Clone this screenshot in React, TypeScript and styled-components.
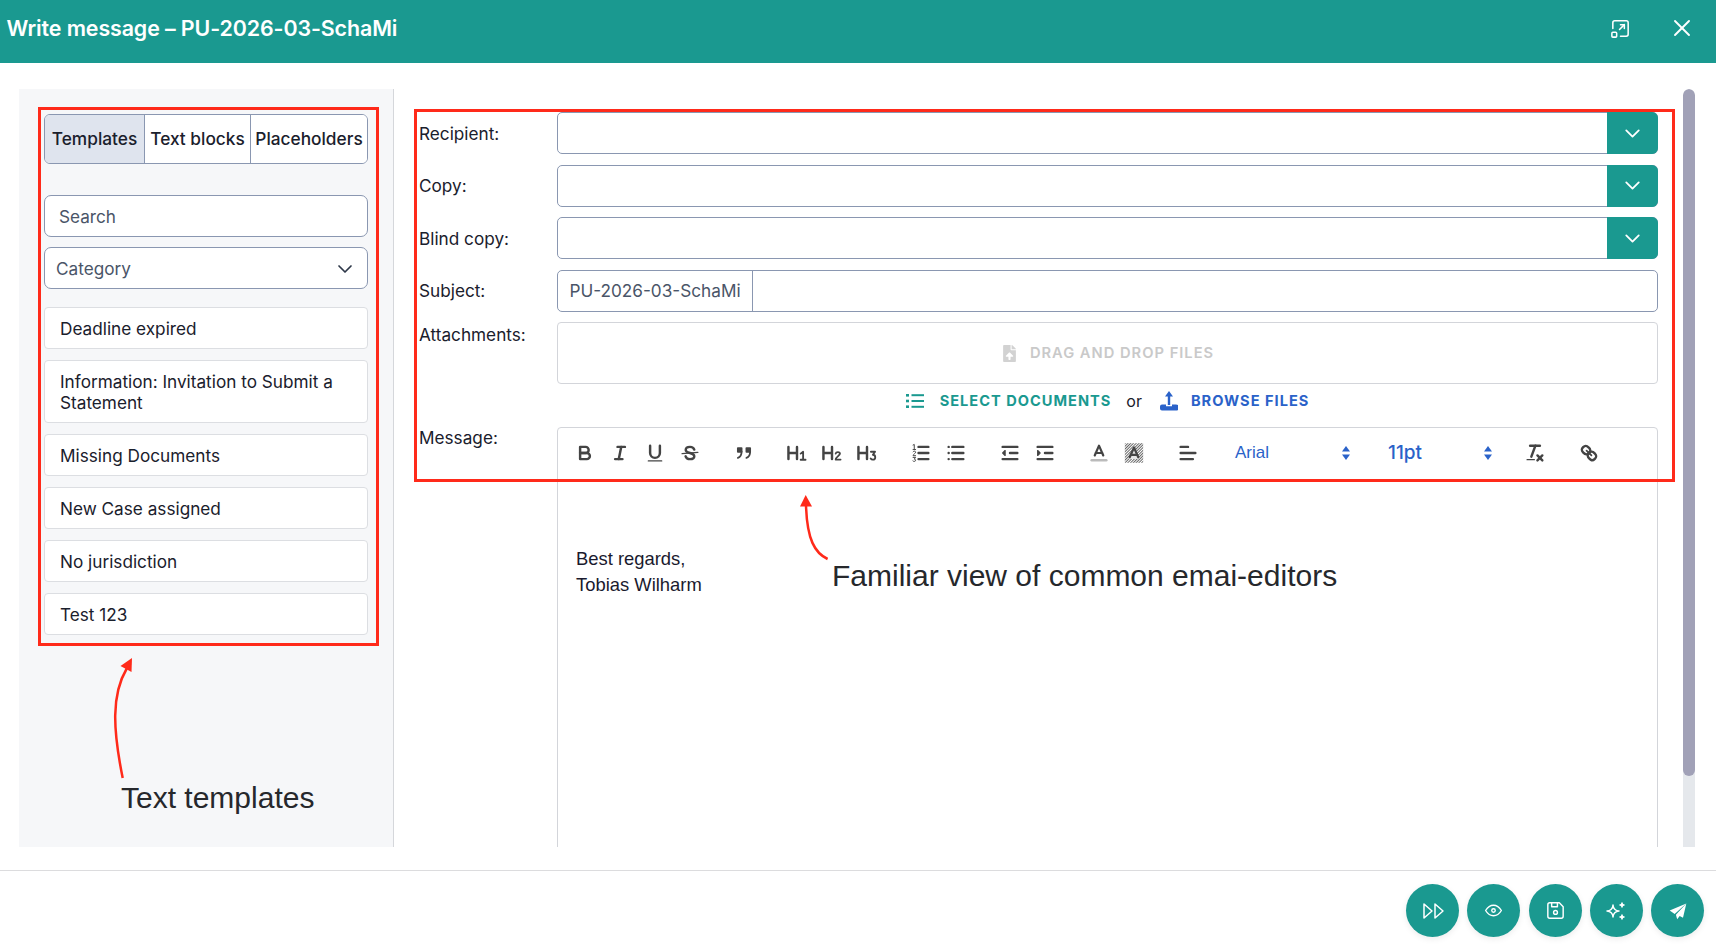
import styled, { createGlobalStyle } from 'styled-components';
import { ReactNode } from 'react';
import { TbWindowMaximize, TbX, TbChevronDown, TbPlayerTrackNext, TbEye, TbDeviceFloppy, TbSparkles } from 'react-icons/tb';
import { FaFileUpload } from 'react-icons/fa';

const colors = {
  teal: '#1a9990',
  border: '#8a97b1',
  softBorder: '#d3d5da',
  text: '#1a202c',
  blue: '#2a62c9',
  red: '#ff2a1a',
};

const GlobalStyle = createGlobalStyle`
  html, body {
    margin: 0;
    padding: 0;
    background: #fff;
    overflow: hidden;
    font-family: Inter, "Liberation Sans", sans-serif;
    color: ${colors.text};
  }
  * {
    box-sizing: border-box;
  }
`;

const Page = styled.div`
  position: relative;
  width: 1716px;
  height: 945px;
  display: flex;
  flex-direction: column;
  overflow: hidden;
`;

const Header = styled.header`
  height: 63px;
  flex: none;
  background: ${colors.teal};
  color: #fff;
  display: flex;
  align-items: center;
  justify-content: space-between;
  padding: 0 20px 7px 6.5px;
`;

const Title = styled.h1`
  margin: 0;
  font-size: 21.4px;
  font-weight: 600;
  letter-spacing: -0.1px;
`;

const HeaderIcons = styled.div`
  display: flex;
  align-items: center;
  gap: 36px;
  color: #fff;
`;

const Body = styled.div`
  flex: 1;
  min-height: 0;
  display: flex;
  padding: 26px 21px 23px 19px;
`;

const Sidebar = styled.aside`
  width: 375px;
  flex: none;
  background: #f6f7f9;
  border-right: 1px solid #d5d7db;
  padding: 25px 25px 0 25px;
  display: flex;
  flex-direction: column;
`;

const Tabs = styled.div`
  display: flex;
  height: 50px;
  border: 1px solid ${colors.border};
  border-radius: 6px;
  background: #fff;
  overflow: hidden;
  margin-bottom: 31px;
`;

const Tab = styled.div<{ $active?: boolean; $width: number }>`
  width: ${(p) => p.$width}px;
  flex: none;
  display: flex;
  align-items: center;
  justify-content: center;
  padding-bottom: 2px;
  font-size: 17.3px;
  font-weight: 500;
  white-space: nowrap;
  background: ${(p) => (p.$active ? '#dfe4ee' : '#fff')};
  border-right: 1px solid ${colors.border};
  &:last-child {
    border-right: none;
    flex: 1;
  }
`;

const SearchBox = styled.div`
  height: 42px;
  border: 1px solid ${colors.border};
  border-radius: 7px;
  background: #fff;
  display: flex;
  align-items: center;
  padding: 1px 0 0 14px;
  font-size: 17.2px;
  color: #4a5568;
  margin-bottom: 10px;
`;

const CategorySelect = styled.div`
  height: 42px;
  border: 1px solid ${colors.border};
  border-radius: 7px;
  background: #fff;
  display: flex;
  align-items: center;
  justify-content: space-between;
  padding: 1px 10px 0 11px;
  font-size: 17.2px;
  color: #4a5568;
  margin-bottom: 18px;
`;

const TemplateList = styled.div`
  display: flex;
  flex-direction: column;
  gap: 11px;
`;

const TemplateItem = styled.div`
  min-height: 42px;
  border: 1px solid #dcdee2;
  border-radius: 4px;
  background: #fff;
  padding: 10px 15px 9px;
  font-size: 17.2px;
  line-height: 21px;
  color: ${colors.text};
`;

const Main = styled.main`
  flex: 1;
  min-width: 0;
  padding: 23px 25px 0 25px;
  display: flex;
  flex-direction: column;
  overflow: hidden;
`;

const FieldRow = styled.div`
  display: flex;
  align-items: center;
  margin-bottom: 10.5px;
`;

const TopRow = styled.div`
  display: flex;
  align-items: flex-start;
`;

const MessageRow = styled(TopRow)`
  flex: 1;
  min-height: 0;
`;

const Label = styled.label<{ $pt?: number }>`
  width: 138px;
  flex: none;
  font-size: 17.2px;
  padding-top: ${(p) => p.$pt ?? 0}px;
  color: ${colors.text};
`;

const ComboInput = styled.div`
  flex: 1;
  height: 42px;
  display: flex;
  border: 1px solid ${colors.border};
  border-radius: 5px;
  background: #fff;
`;

const ComboField = styled.div`
  flex: 1;
`;

const ComboButton = styled.div`
  width: 51px;
  margin: -1px -1px -1px 0;
  background: ${colors.teal};
  color: #fff;
  border-radius: 0 6px 6px 0;
  display: flex;
  align-items: center;
  justify-content: center;
`;

const SubjectPrefix = styled.div`
  width: 195px;
  flex: none;
  border-right: 1px solid ${colors.border};
  display: flex;
  align-items: center;
  justify-content: center;
  font-size: 17.2px;
  color: #4a5568;
`;

const DropZone = styled.div`
  flex: 1;
  height: 62px;
  border: 1px solid ${colors.softBorder};
  border-radius: 4px;
  display: flex;
  align-items: center;
  justify-content: center;
  gap: 12px;
  font-size: 14.7px;
  font-weight: 600;
  letter-spacing: 1px;
  color: #c9c9c9;
`;

const FileActions = styled.div`
  display: flex;
  align-items: center;
  justify-content: center;
  height: 33px;
  margin: 0 0 10px 138px;
  font-size: 16px;
`;

const ActionLink = styled.span<{ $color: string; $gap: number }>`
  display: inline-flex;
  align-items: center;
  gap: ${(p) => p.$gap}px;
  font-size: 14.6px;
  font-weight: 700;
  letter-spacing: 1px;
  color: ${(p) => p.$color};
`;

const OrText = styled.span`
  margin: 0 18px 0 15px;
`;

const Editor = styled.div`
  flex: 1;
  min-width: 0;
  align-self: stretch;
  margin-bottom: -10px;
  border: 1px solid ${colors.softBorder};
  border-radius: 4px 4px 0 0;
  display: flex;
  flex-direction: column;
`;

const Toolbar = styled.div`
  height: 52px;
  flex: none;
  border-bottom: 1px solid ${colors.softBorder};
  display: flex;
  align-items: center;
  padding: 0 0 2px 9px;
  gap: 19px;
`;

const ToolGroup = styled.div`
  display: flex;
  align-items: center;
`;

const HeadingGroup = styled(ToolGroup)`
  margin-left: -1px;
`;

const ToolButton = styled.span`
  width: 35px;
  height: 30px;
  display: flex;
  align-items: center;
  justify-content: center;
  color: #444;
`;

const Picker = styled.div<{ $pl: number; $pr?: number; $width: number; $sans?: boolean }>`
  width: ${(p) => p.$pl + p.$width + (p.$pr ?? 0)}px;
  padding-left: ${(p) => p.$pl}px;
  padding-right: ${(p) => p.$pr ?? 0}px;
  display: flex;
  align-items: center;
  justify-content: space-between;
  color: ${colors.blue};
  font-size: ${(p) => (p.$sans ? 17 : 19)}px;
  font-family: ${(p) => (p.$sans ? '"Liberation Sans", Arial, sans-serif' : 'inherit')};
  font-weight: ${(p) => (p.$sans ? 400 : 500)};
`;

const EditorBody = styled.div`
  flex: 1;
  padding: 66px 18px 0;
  font-family: "Liberation Sans", Arial, sans-serif;
  font-size: 18.4px;
  line-height: 26px;
  color: #1a1a2e;
`;

const Scrollbar = styled.div`
  width: 12px;
  flex: none;
  background: #e5e8ec;
  border-radius: 6px 6px 0 0;
  overflow: hidden;
`;

const ScrollThumb = styled.div`
  height: 687px;
  background: #a1a1b7;
  border-radius: 6px;
`;

const Footer = styled.footer`
  height: 75px;
  flex: none;
  border-top: 1.5px solid #dcdcde;
  display: flex;
  align-items: center;
  justify-content: flex-end;
  gap: 8.2px;
  padding: 5px 12px 0 0;
`;

const RoundButton = styled.button`
  width: 53px;
  height: 53px;
  padding: 0;
  border: none;
  border-radius: 50%;
  background: ${colors.teal};
  color: #fff;
  display: flex;
  align-items: center;
  justify-content: center;
  box-shadow: 0 2px 6px rgba(0, 0, 0, 0.08);
`;

const RedBox = styled.div<{ $x: number; $y: number; $w: number; $h: number }>`
  position: absolute;
  left: ${(p) => p.$x}px;
  top: ${(p) => p.$y}px;
  width: ${(p) => p.$w}px;
  height: ${(p) => p.$h}px;
  border: 3px solid ${colors.red};
  pointer-events: none;
`;

const Note = styled.div<{ $x: number; $y: number }>`
  position: absolute;
  left: ${(p) => p.$x}px;
  top: ${(p) => p.$y}px;
  font-family: "Liberation Sans", Arial, sans-serif;
  font-size: 30px;
  line-height: 34px;
  color: #26282c;
  white-space: nowrap;
`;

const ArrowLayer = styled.svg`
  position: absolute;
  left: 0;
  top: 0;
  pointer-events: none;
`;

function QuillIcon({ children }: { children: ReactNode }) {
  return (
    <svg width="22" height="22" viewBox="0 0 18 18" fill="none" stroke="#444" strokeWidth="2" strokeLinecap="round" strokeLinejoin="round">
      {children}
    </svg>
  );
}

function PickerArrows() {
  return (
    <svg width="10" height="16" viewBox="0 0 10 16" fill={colors.blue}>
      <path d="M5 1 9 6.5H1Z" />
      <path d="M5 15 9 9.5H1Z" />
    </svg>
  );
}

const templates = [
  'Deadline expired',
  'Information: Invitation to Submit a Statement',
  'Missing Documents',
  'New Case assigned',
  'No jurisdiction',
  'Test 123',
];

function App() {
  return (
    <Page>
      <GlobalStyle />
      <Header>
        <Title>Write message – PU-2026-03-SchaMi</Title>
        <HeaderIcons>
          <TbWindowMaximize size={23} strokeWidth={1.6} />
          <TbX size={28} strokeWidth={1.6} />
        </HeaderIcons>
      </Header>

      <Body>
        <Sidebar>
          <Tabs>
            <Tab $active $width={100}>Templates</Tab>
            <Tab $width={106}>Text blocks</Tab>
            <Tab $width={116}>Placeholders</Tab>
          </Tabs>
          <SearchBox>Search</SearchBox>
          <CategorySelect>
            Category
            <TbChevronDown size={24} color="#2d3748" strokeWidth={1.7} />
          </CategorySelect>
          <TemplateList>
            {templates.map((t) => (
              <TemplateItem key={t}>{t}</TemplateItem>
            ))}
          </TemplateList>
        </Sidebar>

        <Main>
          {['Recipient:', 'Copy:', 'Blind copy:'].map((l) => (
            <FieldRow key={l}>
              <Label>{l}</Label>
              <ComboInput>
                <ComboField />
                <ComboButton>
                  <TbChevronDown size={25} strokeWidth={1.7} />
                </ComboButton>
              </ComboInput>
            </FieldRow>
          ))}
          <FieldRow>
            <Label>Subject:</Label>
            <ComboInput>
              <SubjectPrefix>PU-2026-03-SchaMi</SubjectPrefix>
              <ComboField />
            </ComboInput>
          </FieldRow>
          <TopRow>
            <Label $pt={2}>Attachments:</Label>
            <DropZone>
              <FaFileUpload size={17} color="#d2d2d2" />
              DRAG AND DROP FILES
            </DropZone>
          </TopRow>
          <FileActions>
            <ActionLink $color={colors.teal} $gap={16}>
              <svg width="18" height="16" viewBox="0 0 18 16" fill={colors.teal}>
                <rect x="0" y="1" width="3" height="2.6" />
                <rect x="0" y="6.7" width="3" height="2.6" />
                <rect x="0" y="12.4" width="3" height="2.6" />
                <rect x="5.5" y="1.2" width="12.5" height="2" />
                <rect x="5.5" y="7" width="12.5" height="2" />
                <rect x="5.5" y="12.8" width="12.5" height="2" />
              </svg>
              SELECT DOCUMENTS
            </ActionLink>
            <OrText>or</OrText>
            <ActionLink $color={colors.blue} $gap={13}>
              <svg width="18" height="20" viewBox="0 0 18 20" fill={colors.blue}>
                <path d="M9 0 13 5.5H10.2V14H7.8V5.5H5Z" />
                <path d="M0 15.5A2 2 0 0 1 2 13.5H6V15.2H12V13.5H16A2.3 2.3 0 0 1 16 19.5H2A2 2 0 0 1 0 17.5Z" />
              </svg>
              BROWSE FILES
            </ActionLink>
          </FileActions>
          <MessageRow>
            <Label>Message:</Label>
            <Editor>
              <Toolbar>
                <ToolGroup>
                  <ToolButton>
                    <QuillIcon>
                      <path d="M5,4H9.5A2.5,2.5,0,0,1,12,6.5v0A2.5,2.5,0,0,1,9.5,9H5V4Z" />
                      <path d="M5,9h5.5A2.5,2.5,0,0,1,13,11.5v0A2.5,2.5,0,0,1,10.5,14H5V9Z" />
                    </QuillIcon>
                  </ToolButton>
                  <ToolButton>
                    <QuillIcon>
                      <line x1="7" x2="13" y1="4" y2="4" />
                      <line x1="5" x2="11" y1="14" y2="14" />
                      <line x1="8" x2="10" y1="14" y2="4" />
                    </QuillIcon>
                  </ToolButton>
                  <ToolButton>
                    <QuillIcon>
                      <path d="M5,3V9a4,4,0,0,0,4,4h0a4,4,0,0,0,4-4V3" />
                      <rect x="3" y="15" width="12" height="1" rx=".5" fill="#444" stroke="none" />
                    </QuillIcon>
                  </ToolButton>
                  <ToolButton>
                    <QuillIcon>
                      <line x1="15.5" x2="2.5" y1="8.5" y2="9.5" strokeWidth="1" />
                      <path d="M12.5 6.2C12 4.7 10.6 4 9 4 7 4 5.5 5 5.5 6.5 5.5 7.8 6.6 8.4 9 9c2.4.6 3.5 1.2 3.5 2.6C12.5 13 11 14 9 14c-1.7 0-3.1-.8-3.6-2.3" />
                    </QuillIcon>
                  </ToolButton>
                </ToolGroup>
                <ToolGroup>
                  <ToolButton>
                    <QuillIcon>
                      <rect x="4" y="5" width="3" height="3" fill="#444" strokeWidth="1.5" />
                      <rect x="11" y="5" width="3" height="3" fill="#444" strokeWidth="1.5" />
                      <path d="M7,8c0,4-3,5-3,5" strokeWidth="1.5" />
                      <path d="M14,8c0,4-3,5-3,5" strokeWidth="1.5" />
                    </QuillIcon>
                  </ToolButton>
                </ToolGroup>
                <HeadingGroup>
                  <ToolButton>
                    <QuillIcon>
                      <path d="M2 4V14M9 4V14M2 9H9" />
                      <path d="M12 9.5 14 8V14M12 14.5H16" strokeWidth="1.5" />
                    </QuillIcon>
                  </ToolButton>
                  <ToolButton>
                    <QuillIcon>
                      <path d="M2 4V14M9 4V14M2 9H9" />
                      <path d="M12 9.5C12.3 7.8 15.5 7.8 15.5 9.6 15.5 11 12 12.4 12 14.4H16" strokeWidth="1.5" />
                    </QuillIcon>
                  </ToolButton>
                  <ToolButton>
                    <QuillIcon>
                      <path d="M2 4V14M9 4V14M2 9H9" />
                      <path d="M12.2 8H15.6L13.8 10.4C16.4 10.4 16.4 14.4 13.8 14.4 13 14.4 12.4 14.1 12 13.5" strokeWidth="1.5" />
                    </QuillIcon>
                  </ToolButton>
                </HeadingGroup>
                <ToolGroup>
                  <ToolButton>
                    <QuillIcon>
                      <path d="M7 4H15M7 9H15M7 14H15" />
                      <path d="M2.5 2.5 3.5 2V6M2.5 6.2H4.6M2.5 8C3 7.2 4.6 7.3 4.6 8.4 4.6 9.4 2.5 10 2.5 11.2H4.6M2.5 12.6H4.6L3.5 14C4.9 14 4.9 15.9 3.5 15.9 3.1 15.9 2.7 15.8 2.4 15.5" strokeWidth=".8" />
                    </QuillIcon>
                  </ToolButton>
                  <ToolButton>
                    <QuillIcon>
                      <path d="M6 4H15M6 9H15M6 14H15M3 4H3M3 9H3M3 14H3" />
                    </QuillIcon>
                  </ToolButton>
                </ToolGroup>
                <ToolGroup>
                  <ToolButton>
                    <QuillIcon>
                      <path d="M3 14H15M3 4H15M9 9H15" />
                      <polygon points="5 7 5 11 3 9" fill="#444" strokeWidth="1" />
                    </QuillIcon>
                  </ToolButton>
                  <ToolButton>
                    <QuillIcon>
                      <path d="M3 14H15M3 4H15M9 9H15" />
                      <polygon points="3 7 3 11 5 9" fill="#444" strokeWidth="1" />
                    </QuillIcon>
                  </ToolButton>
                </ToolGroup>
                <ToolGroup>
                  <ToolButton>
                    <QuillIcon>
                      <line x1="3" x2="15" y1="15" y2="15" stroke="#bbb" />
                      <polyline points="5.5 11 9 3 12.5 11" strokeWidth="1.8" />
                      <line x1="11.6" x2="6.4" y1="9" y2="9" strokeWidth="1.8" />
                    </QuillIcon>
                  </ToolButton>
                  <ToolButton>
                    <svg width="22" height="22" viewBox="0 0 18 18" fill="none" stroke="#444" strokeWidth="1.8" strokeLinecap="round" strokeLinejoin="round">
                      <defs>
                        <pattern id="hatch" width="1.6" height="1.6" patternUnits="userSpaceOnUse" patternTransform="rotate(45)">
                          <rect width="0.8" height="1.6" fill="#666" stroke="none" />
                        </pattern>
                      </defs>
                      <rect x="1.5" y="1" width="15" height="16" fill="url(#hatch)" stroke="none" />
                      <path d="M4.5 14 9 2.5 13.5 14Z" fill="#e4e4e4" stroke="none" />
                      <polyline points="5.5 12.5 9 4.5 12.5 12.5" />
                      <line x1="11.6" x2="6.4" y1="10.5" y2="10.5" />
                    </svg>
                  </ToolButton>
                </ToolGroup>
                <ToolGroup>
                  <ToolButton>
                    <QuillIcon>
                      <path d="M3 4H9M3 9H15M3 14H13" />
                    </QuillIcon>
                  </ToolButton>
                </ToolGroup>
                <ToolGroup>
                  <Picker $pl={11} $width={116} $sans>
                    Arial
                    <PickerArrows />
                  </Picker>
                </ToolGroup>
                <ToolGroup>
                  <Picker $pl={18} $pr={5} $width={105}>
                    11pt
                    <PickerArrows />
                  </Picker>
                </ToolGroup>
                <ToolGroup>
                  <ToolButton>
                    <QuillIcon>
                      <line x1="5" x2="13" y1="3" y2="3" />
                      <line x1="6" x2="9.35" y1="12" y2="3" />
                      <line x1="11" x2="15" y1="11" y2="15" />
                      <line x1="15" x2="11" y1="11" y2="15" />
                      <rect x="2" y="14" width="7" height="1" rx=".5" fill="#444" stroke="none" />
                    </QuillIcon>
                  </ToolButton>
                </ToolGroup>
                <ToolGroup>
                  <ToolButton>
                    <QuillIcon>
                      <line x1="7" x2="11" y1="7" y2="11" strokeWidth="1.4" />
                      <path d="M8.9,4.577a3.476,3.476,0,0,1,.36,4.679A3.476,3.476,0,0,1,4.577,8.9C3.185,7.5,2.035,6.4,4.217,4.217S7.5,3.185,8.9,4.577Z" />
                      <path d="M13.423,9.1a3.476,3.476,0,0,0-4.679-.36,3.476,3.476,0,0,0,.36,4.679c1.392,1.392,2.5,2.542,4.679.36S14.815,10.5,13.423,9.1Z" />
                    </QuillIcon>
                  </ToolButton>
                </ToolGroup>
              </Toolbar>
              <EditorBody>
                Best regards,
                <br />
                Tobias Wilharm
              </EditorBody>
            </Editor>
          </MessageRow>
        </Main>
        <Scrollbar>
          <ScrollThumb />
        </Scrollbar>
      </Body>

      <Footer>
        <RoundButton><TbPlayerTrackNext size={24} strokeWidth={1.5} /></RoundButton>
        <RoundButton><TbEye size={21} strokeWidth={1.6} /></RoundButton>
        <RoundButton><TbDeviceFloppy size={23} strokeWidth={1.5} /></RoundButton>
        <RoundButton><TbSparkles size={24} strokeWidth={1.5} /></RoundButton>
        <RoundButton>
          <svg width="20" height="20" viewBox="0 0 24 24" fill="#fff">
            <path d="M22 3 2 11.5l6 4Z" />
            <path d="M22 3 9.5 16.5 11 22l3-4 4 2Z" />
          </svg>
        </RoundButton>
      </Footer>

      <RedBox $x={38} $y={107} $w={341} $h={539} />
      <RedBox $x={414} $y={109} $w={1261} $h={373} />
      <ArrowLayer width="1716" height="945" fill="none">
        <path d="M122.7 778C113 730 111 695 127 668" stroke={colors.red} strokeWidth="2.5" />
        <path d="M132 658 131.5 672 120.5 666Z" fill={colors.red} />
        <path d="M827.6 559C815 553 807 540 806 505" stroke={colors.red} strokeWidth="2.5" />
        <path d="M805.7 495 812 506.5 800 506.5Z" fill={colors.red} />
      </ArrowLayer>
      <Note $x={121} $y={781}>Text templates</Note>
      <Note $x={832} $y={559}>Familiar view of common emai-editors</Note>
    </Page>
  );
}

export default App;
